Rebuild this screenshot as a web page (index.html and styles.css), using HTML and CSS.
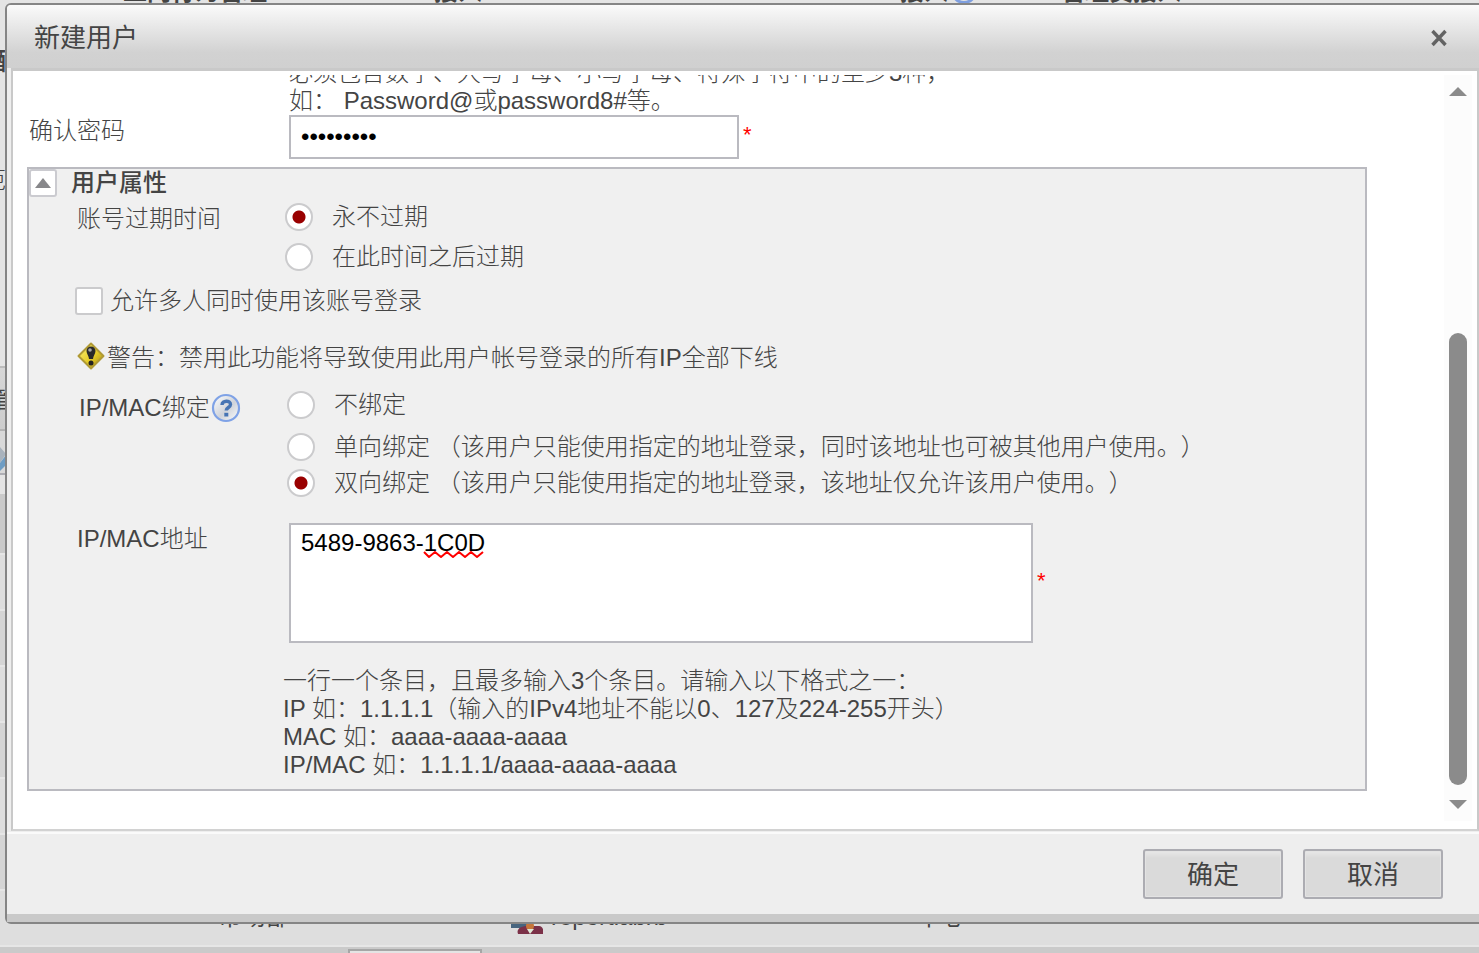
FILE: index.html
```html
<!DOCTYPE html>
<html lang="zh-CN">
<head>
<meta charset="utf-8">
<title>新建用户</title>
<link rel="stylesheet" href="styles.css">
</head>
<body>
<div class="backdrop" aria-hidden="true">
  <div class="bg-head"><span class="bg-a">上网行为管理</span><span class="bg-b">接入</span><span class="bg-c">接入</span><i class="bg-dot"></i><span class="bg-d">管理员接入</span></div>
  <div class="bg-side bg-side-1">配</div>
  <div class="bg-side bg-side-2">范</div>
  <div class="bg-tool">管</div>
  <div class="bg-tool-icon"><svg width="6" height="28" viewBox="0 0 6 28"><path d="M0 2l6 7-6 9z" fill="#a9b3bd"/><path d="M0 18l6-8v10l-6 6z" fill="#6e9dc4"/></svg></div>
  <div class="bg-title"></div>
  <div class="bg-row"></div>
  <div class="bg-row bg-alt"></div>
  <div class="bg-row"></div>
  <div class="bg-row bg-alt"></div>
  <div class="bg-row"></div>
  <div class="bg-row bg-alt"></div>
  <div class="bg-row bg-last"><span class="bg-e">市场部</span><svg class="bg-avatar" width="32" height="28" viewBox="0 0 32 28"><path d="M0 8h16v14H0z" fill="#47657f"/><path d="M7 28c-2-5 3-8 9-8h12c4 0 5 5 4 8z" fill="#7b3148"/><circle cx="19" cy="20" r="4" fill="#c7773b"/><path d="M16 23l3 5 4-5z" fill="#dfe8d8"/></svg><span class="bg-f">reportlabrb</span><span class="bg-g">中心</span></div>
  <div class="bg-foot"><span class="bg-box"></span></div>
</div>

<form class="dialog" role="dialog" aria-labelledby="dlg-title">
  <header class="dialog-head">
    <h1 id="dlg-title">新建用户</h1>
    <button type="button" class="close" aria-label="关闭"><svg width="18" height="18" viewBox="0 0 18 18"><path d="M2.500 2l13 14M15.500 2l-13 14" stroke="#636363" stroke-width="3.400"/></svg></button>
  </header>
  <div class="dialog-body">
    <div class="content">
      <div class="password">
        <label class="confirm-label" for="pwd">确认密码</label>
        <div>
          <p class="lines pwd-hint">必须包含数字、大写字母、小写字母、特殊字符中的至少3种，<br>如： Password@或password8#等。</p>
          <div class="field"><input id="pwd" class="pwd" type="password" value="Password8"><span class="star">*</span></div>
        </div>
      </div>

      <section class="panel">
        <div class="panel-head">
          <button type="button" class="fold" aria-label="收起"><svg width="18" height="12" viewBox="0 0 18 12"><path d="M1 11l8-10 8 10z" fill="#87878a"/></svg></button>
          <h2>用户属性</h2>
        </div>
        <div class="row" role="radiogroup" aria-labelledby="l-exp">
          <span id="l-exp" class="label label-exp">账号过期时间</span>
          <div>
            <label class="opt opt-exp"><input type="radio" name="exp" checked>永不过期</label>
            <label class="opt opt-exp"><input type="radio" name="exp">在此时间之后过期</label>
          </div>
        </div>
        <label class="multi"><input type="checkbox">允许多人同时使用该账号登录</label>
        <div class="warn"><svg width="28" height="28" viewBox="0 0 28 28"><defs><linearGradient id="wg" x1="0" y1="0" x2="1" y2="1"><stop offset="0" stop-color="#fff47a"/><stop offset=".55" stop-color="#e6cc28"/><stop offset="1" stop-color="#9b8212"/></linearGradient></defs><path d="M14 1.500L26.500 14 14 26.500 1.500 14z" fill="url(#wg)" stroke="#b09a35" stroke-width="2" stroke-linejoin="round"/><path d="M9.500 9a4.500 4.500 0 0 1 9 0c0 3-2.500 5-2.500 8h-4c0-3-2.500-5-2.500-8z" fill="#292929"/><circle cx="13" cy="8" r="1.800" fill="#aaa"/><circle cx="14" cy="21" r="2.500" fill="#222"/></svg><span class="warn-text">警告：禁用此功能将导致使用此用户帐号登录的所有IP全部下线</span></div>
        <div class="row row-bind" role="radiogroup" aria-labelledby="l-bind">
          <span class="label label-bind"><span id="l-bind">IP/MAC绑定</span><svg width="30" height="30" viewBox="0 0 30 30"><defs><linearGradient id="hg" x1="0" y1="0" x2="1" y2="1"><stop offset="0" stop-color="#fff"/><stop offset=".55" stop-color="#cfd3da"/><stop offset="1" stop-color="#fff"/></linearGradient></defs><circle cx="15" cy="15" r="13" fill="url(#hg)" stroke="#7fa2e6" stroke-width="2.200"/><path d="M11 12c0-5 8.500-5 8.500-.5 0 3-4.300 3-4.300 6" fill="none" stroke="#4674b4" stroke-width="3.400"/><path d="M13.300 19.800h4v3.700h-4z" fill="#4674b4"/></svg></span>
          <div>
            <label class="opt opt-first"><input type="radio" name="bind">不绑定</label>
            <label class="opt"><input type="radio" name="bind">单向绑定 （该用户只能使用指定的地址登录，同时该地址也可被其他用户使用。）</label>
            <label class="opt"><input type="radio" name="bind" checked>双向绑定 （该用户只能使用指定的地址登录，该地址仅允许该用户使用。）</label>
          </div>
        </div>
        <div class="row row-addr">
          <label class="label label-addr" for="addr">IP/MAC地址</label>
          <div class="field">
            <div class="area-wrap"><textarea id="addr" class="area" spellcheck="false">5489-9863-1C0D</textarea><svg class="squiggle" width="62" height="8" viewBox="0 0 62 8"><path d="M1 1l5 5 6-5 6 5 6-5 6 5 6-5 6 5 6-5 6 5 6-5" fill="none" stroke="#f00" stroke-width="2" stroke-linejoin="round"/></svg></div>
            <span class="star">*</span>
          </div>
        </div>
        <p class="lines help">一行一个条目，且最多输入3个条目。请输入以下格式之一：<br>IP 如：1.1.1.1（输入的IPv4地址不能以0、127及224-255开头）<br>MAC 如：aaaa-aaaa-aaaa<br>IP/MAC 如：1.1.1.1/aaaa-aaaa-aaaa</p>
      </section>
    </div>
    <div class="scrollbar" aria-hidden="true">
      <svg width="18" height="9" viewBox="0 0 18 9"><path d="M0 9l9-9 9 9z" fill="#8b8b8b"/></svg>
      <div class="track"><div class="thumb"></div></div>
      <svg width="18" height="9" viewBox="0 0 18 9"><path d="M0 0h18l-9 9z" fill="#8b8b8b"/></svg>
    </div>
  </div>
  <footer class="dialog-foot">
    <button type="submit" class="btn">确定</button>
    <button type="button" class="btn">取消</button>
  </footer>
</form>
</body>
</html>
```

FILE: styles.css
```css
* { box-sizing: border-box; }
body {
  margin: 0;
  min-height: 100vh;
  overflow: hidden;
  background: #dedede;
  color: #444;
  font: 300 24px/28px "Liberation Sans", "Noto Sans CJK SC", sans-serif;
  text-spacing-trim: space-all;
}
h1, h2, p { margin: 0; }
button, input, textarea { font: inherit; color: inherit; margin: 0; }

/* page behind the dialog */
.backdrop { height: 100vh; overflow: hidden; white-space: nowrap; }
.bg-head { height: 46px; background: #e4e4e4; display: flex; align-items: flex-start; font-weight: 700; }
.bg-head span { margin-top: -22px; }
.bg-a { margin-left: 123px; }
.bg-b { margin-left: 167px; }
.bg-c { margin-left: 418px; }
.bg-dot { width: 26px; height: 26px; margin: -22px 0 0 3px; border: 3px solid #7f9fdf; border-radius: 50%; }
.bg-d { margin-left: 84px; }
.bg-side { background: #e4e4e4; text-indent: -18px; }
.bg-side-1 { height: 120px; padding-top: 2px; font-weight: 700; text-indent: -7px; }
.bg-side-2 { height: 200px; }
.bg-tool { height: 63px; padding-top: 18px; background: linear-gradient(#d6d6d6, #cdcdcd); border-top: 2px solid #bcbcbc; text-indent: -7px; font-weight: 400; }
.bg-tool-icon { height: 46px; padding-top: 14px; background: #d9d9d9; border-top: 2px solid #b4b4b4; border-bottom: 2px solid #aeaeb4; }
.bg-title { height: 78px; background: linear-gradient(#e4e4e4 19px, #cacaca 19px); }
.bg-row { height: 56px; background: #dedede; border-top: 2px solid #e6e6e6; }
.bg-alt { background: #d5d5d5; }
.bg-last { display: flex; padding-top: 15px; font-weight: 400; }
.bg-last span { margin-top: -3px; }
.bg-e { margin-left: 218px; }
.bg-avatar { margin-left: 221px; }
.bg-f { margin-left: 8px; }
.bg-g { margin-left: 250px; }
.bg-foot { height: 12px; background: #cacaca; border-top: 2px solid #e6e6e6; padding: 2px 0 0 348px; }
.bg-box { display: block; width: 134px; height: 40px; border: 2px solid #a6a6a6; background: #e4e4e4; }

/* dialog frame */
.dialog {
  position: absolute;
  top: 3px;
  left: 5px;
  right: -6px;
  background: #eee;
  border: 2px solid #858585;
  border-radius: 6px;
}
.dialog-head {
  height: 63px;
  padding: 2px 35px 0 27px;
  display: flex;
  align-items: center;
  justify-content: space-between;
  border-radius: 4px 4px 0 0;
  background: linear-gradient(#fafafa, #d2d2d2 75%, #d0d0d0);
}
.dialog-head h1 { font-size: 26px; font-weight: 400; }
.close { padding: 0; border: 0; background: none; display: flex; }
.dialog-body {
  margin: 0 4px;
  padding: 4px 5px 8px 0;
  border: 2px solid #c9c9c9;
  border-top-width: 3px;
  border-bottom-color: #d2d2d2;
  background: #fff;
  display: flex;
}
.content { flex: 1; min-width: 0; padding: 0 77px 30px 14px; overflow: hidden; }
.dialog-foot {
  margin-top: 1px;
  border-top: 2px solid #fafafa;
  border-bottom: 8px solid #c9c9c9;
  padding: 15px 40px;
  display: flex;
  justify-content: flex-end;
  gap: 20px;
}
.btn {
  width: 140px;
  height: 50px;
  border: 2px solid #acacb2;
  border-radius: 3px;
  padding: 2px 0 0;
  background: linear-gradient(#e8e8e8, #dadada 7px);
  box-shadow: inset 0 0 0 1px #e3e3e3;
  color: #444;
  font-size: 26px;
  font-weight: 400;
}

/* scrollbar */
.scrollbar { width: 28px; padding: 12px 0; background: #fcfcfc; display: flex; flex-direction: column; align-items: center; }
.track { flex: 1; width: 18px; padding: 15px 0; display: flex; flex-direction: column; justify-content: flex-end; }
.thumb { height: 67%; border-radius: 9px; background: #8b8b8b; }

/* fields */
.password { display: flex; margin: -16px 0 8px; }
.confirm-label { width: 262px; padding: 58px 0 0 2px; }
.field { display: flex; align-items: center; }
.pwd, .area { border: 2px solid #babac0; border-radius: 0; outline: 0; background: #fff; color: #000; padding: 4px 10px; }
.pwd { width: 450px; height: 44px; }
.area { display: block; width: 100%; height: 120px; resize: none; overflow: hidden; }
.area-wrap { position: relative; width: 744px; }
.squiggle { position: absolute; left: 134px; top: 28px; }
.star { color: #f00; margin-left: 4px; padding-bottom: 4px; font-size: 22px; }

.panel { border: 2px solid #babac0; background: #f0f0f0; padding-bottom: 10px; }
.panel-head { display: flex; gap: 14px; }
.panel-head h2 { font-size: 24px; font-weight: 500; }
.fold { width: 28px; height: 28px; padding: 0; border: 2px solid #cbcbd0; border-radius: 3px; background: #fff; display: flex; align-items: center; justify-content: center; }
.row { display: flex; padding-left: 48px; }
.label { flex: none; width: 208px; }
.label-exp { padding-top: 8px; }
.opt { display: flex; align-items: center; gap: 19px; height: 36px; }
.opt-exp { height: 40px; }
.opt-first { margin-bottom: 6px; }
input[type="radio"], input[type="checkbox"] { appearance: none; flex: none; width: 28px; height: 28px; border: 2px solid #cbcbcd; background: #fff; }
input[type="radio"] { border-radius: 50%; }
input[type="radio"]:checked { background: radial-gradient(circle, #900 6px, #fff 7px); }
input[type="checkbox"] { border-radius: 3px; }
.multi { display: flex; align-items: center; gap: 7px; height: 48px; padding-left: 46px; }
.warn { display: flex; align-items: center; gap: 2px; height: 62px; padding-left: 48px; }
.warn-text { padding-top: 4px; }
.row-bind { padding-left: 50px; }
.label-bind { display: flex; align-items: center; gap: 1px; height: 42px; }
.row-addr { margin: 22px 0 24px; }
.label-addr { width: 212px; padding-top: 2px; }
.help { padding-left: 254px; }
```
